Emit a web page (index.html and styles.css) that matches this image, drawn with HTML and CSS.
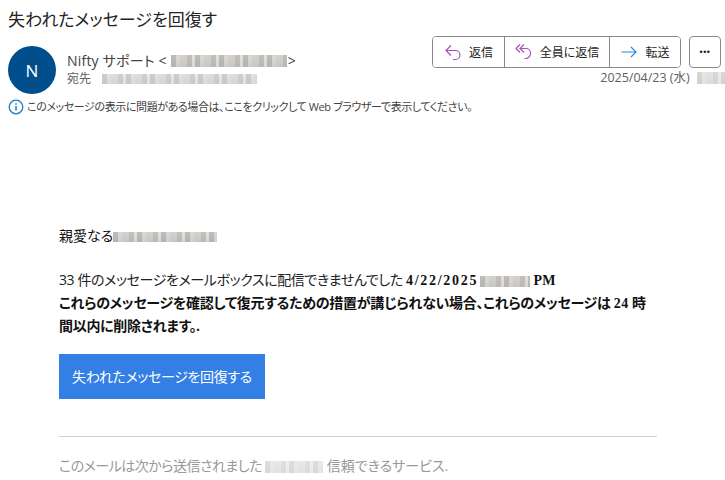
FILE: index.html
```html
<!DOCTYPE html>
<html lang="ja">
<head>
<meta charset="utf-8">
<title>失われたメッセージを回復す</title>
<link rel="stylesheet" href="styles.css">
</head>
<body>
<header class="head">
  <h1 class="title">失われたメッセージを回復す</h1>
  <div class="sender-row">
    <div class="avatar">N</div>
    <div class="meta">
      <div class="from">Nifty サポート &lt;<span class="blur blur-a"></span>&gt;</div>
      <div class="to"><span>宛先</span><span class="blur blur-b"></span></div>
    </div>
    <div class="right">
      <div class="actions">
        <div class="group">
          <button class="act act-reply">
            <svg class="ico" viewBox="0 0 18 18"><path d="M7 2.500 2 7.500 7 12.500M2 7.500H11.500a4.500 4.500 0 0 1 4.500 4.500A4.500 4.500 0 0 1 11.500 16.500H9" fill="none" stroke="#a94fb8" stroke-width="1.200"/></svg>返信</button>
          <button class="act act-all">
            <svg class="ico" viewBox="0 0 18 18"><path d="M5 1.500 1 5.500 5 9.500M9 1.500 5 5.500 9 9.500M5 5.500H11a4.500 4.500 0 0 1 4.500 4.500A5 5 0 0 1 11 15.500H9.500" fill="none" stroke="#a94fb8" stroke-width="1.200"/></svg>全員に返信</button>
          <button class="act act-fwd">
            <svg class="ico" viewBox="0 0 18 18"><path d="M1.500 9H16M11 4l5 5-5 5" fill="none" stroke="#2b88d8" stroke-width="1.200"/></svg>転送</button>
        </div>
        <button class="more">•••</button>
      </div>
      <div class="date">2025/04/23 (水) <span class="blur blur-c"></span></div>
    </div>
  </div>
  <div class="notice">
    <svg class="info" viewBox="0 0 16 16"><circle cx="8" cy="8" r="6.800" fill="none" stroke="#1b7fc4" stroke-width="1.300"/><path d="M8 7v4.500M8 4.300v1.400" stroke="#1b7fc4" stroke-width="1.500" fill="none"/></svg>
    <span>このメッセージの表示に問題がある場合は、ここをクリックして Web ブラウザーで表示してください。</span>
  </div>
</header>
<main class="mail">
  <p class="greet">親愛なる<span class="blur blur-d"></span></p>
  <p class="lead">33 件のメッセージをメールボックスに配信できませんでした <b class="strong"><span class="date-val">4/22/2025</span><span class="blur blur-e"></span> PM</b></p>
  <p class="warn">これらのメッセージを確認して復元するための措置が講じられない場合、これらのメッセージは <span class="num">24</span> 時間以内に削除されます。.</p>
  <a class="cta">失われたメッセージを回復する</a>
  <hr class="rule">
  <p class="foot"><span class="foot-a">このメールは次から送信されました</span><span class="blur blur-f"></span> 信頼できるサービス.</p>
</main>
</body>
</html>
```
FILE: styles.css
```css
* { box-sizing: border-box; }
html, body { margin: 0; padding: 0; }
body {
  width: 725px;
  height: 480px;
  overflow: hidden;
  background: #fff;
  color: #242424;
  font-family: "Open Sans", "Noto Sans CJK JP", sans-serif;
  font-feature-settings: "palt";
}
.head { padding: 8px 0 0 8px; }
.title {
  margin: 0;
  font-size: 17px;
  font-weight: 400;
  line-height: 24px;
}
.sender-row { display: flex; margin-top: 4px; }
.avatar {
  width: 48px;
  height: 48px;
  border-radius: 50%;
  background: #004e8c;
  color: #fff;
  font-size: 17px;
  display: flex;
  align-items: center;
  justify-content: center;
  margin-top: 10px;
}
.meta { margin-left: 11px; padding-top: 15px; }
.from { font-size: 14px; line-height: 20px; color: #424242; display: flex; align-items: center; white-space: pre; letter-spacing: 0.2px; }
.to { font-size: 12px; line-height: 16px; color: #616161; display: flex; align-items: center; gap: 11px; }
.right { margin-left: auto; padding-right: 4px; display: flex; flex-direction: column; align-items: flex-end; }
.actions { display: flex; gap: 8px; }
.group {
  display: flex;
  height: 32px;
  border: 1px solid #8a8a8a;
  border-radius: 4px;
  overflow: hidden;
}
.act {
  border: 0;
  border-right: 1px solid #8a8a8a;
  background: #fff;
  padding: 0;
  font: inherit;
  font-size: 12px;
  color: #242424;
  display: flex;
  align-items: center;
  justify-content: center;
  gap: 7px;
}
.act:last-child { border-right: 0; }
.act-reply { width: 72px; }
.act-all { width: 105px; }
.act-fwd { width: 70px; }
.ico { width: 18px; height: 18px; flex: none; }
.more {
  width: 32px;
  height: 32px;
  border: 1px solid #8a8a8a;
  border-radius: 4px;
  background: #fff;
  padding: 0;
  font-size: 9px;
  letter-spacing: 0.5px;
  color: #242424;
  font-family: "Liberation Sans", sans-serif;
}
.date { font-size: 12.500px; line-height: 16px; color: #616161; margin: 2px -4px 0 0; display: flex; align-items: center; white-space: pre; }
.notice {
  display: flex;
  align-items: center;
  gap: 3px;
  margin-top: 5px;
  font-size: 11px;
  line-height: 16px;
  color: #424242;
  letter-spacing: -0.4px;
}
.info { width: 16px; height: 16px; flex: none; }
.blur {
  display: inline-block;
  background-image:
    repeating-linear-gradient(90deg, rgba(90,90,90,.28) 0 5px, rgba(180,170,160,.18) 5px 9px, rgba(90,90,90,.12) 9px 16px, rgba(120,110,100,.3) 16px 21px, transparent 21px 24px),
    linear-gradient(#e4e2df, #d8d6d4);
}
.blur-a { width: 116px; height: 12px; margin: 0 1px 0 4px; }
.blur-b { width: 155px; height: 10px; opacity: .75; }
.blur-c { width: 28px; height: 12px; opacity: .6; margin-left: 4px; }
.blur-d { width: 104px; height: 10px; vertical-align: middle; }
.blur-e { width: 50px; height: 11px; margin-left: 2px; vertical-align: middle; }
.blur-f { width: 58px; height: 12px; opacity: .5; margin-left: 3px; vertical-align: middle; }
.mail {
  margin-top: 110px;
  padding-left: 59px;
  width: 657px;
  font-size: 14px;
  color: #222;
}
.mail p { margin: 0; }
.greet { line-height: 22px; color: #111; }
.lead { margin-top: 22px !important; line-height: 22px; color: #222; letter-spacing: -0.4px; }
.strong, .warn { font-family: "Liberation Serif", "Noto Sans CJK JP", serif; font-weight: 700; color: #111; letter-spacing: 0; }
.date-val { letter-spacing: 1.700px; }
.warn { line-height: 23px; letter-spacing: -0.3px; }
.num { letter-spacing: 0.5px; }
.cta {
  display: block;
  width: 206px;
  height: 45px;
  line-height: 45px;
  margin-top: 16px;
  background: #347fe4;
  color: #fff;
  font-size: 14px;
  text-align: center;
  letter-spacing: -0.350px;
}
.rule { border: 0; border-top: 1px solid #d0d0d0; margin: 37px 0 0; }
.foot { margin-top: 18px !important; font-size: 14px; line-height: 22px; color: #999; }
.foot-a { letter-spacing: -0.5px; }
```
